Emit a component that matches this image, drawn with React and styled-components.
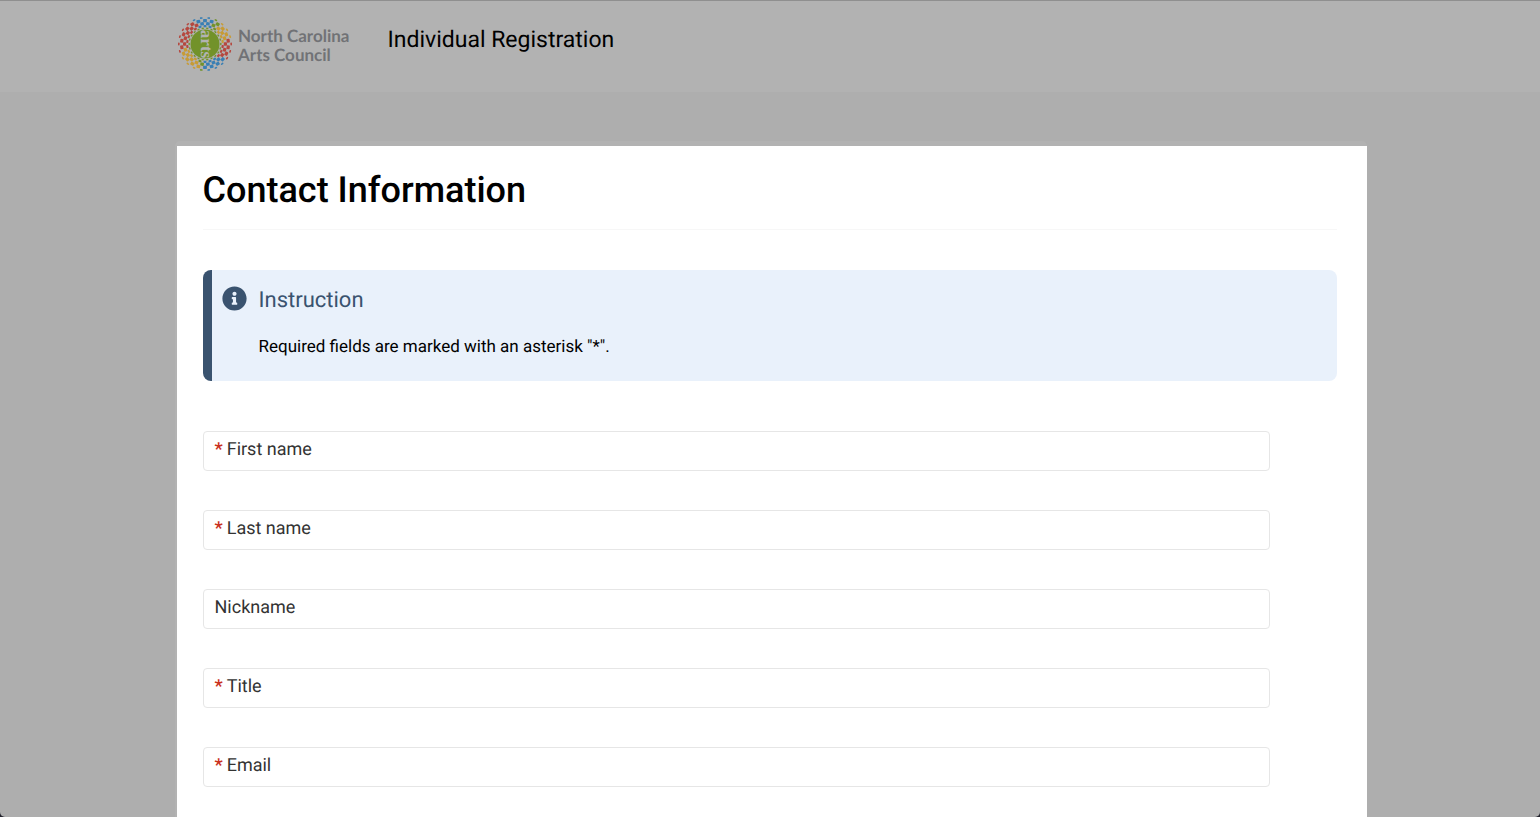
import React from "react";
import styled, { createGlobalStyle } from "styled-components";
import { FaInfoCircle } from "react-icons/fa";

const GlobalStyle = createGlobalStyle`
  * {
    box-sizing: border-box;
  }
  body {
    margin: 0;
    background-color: #22222c;
    font-family: Roboto, "Liberation Sans", sans-serif;
    color: #000;
    text-rendering: geometricPrecision;
  }
`;

const Page = styled.div`
  height: 100vh;
  overflow-y: auto;
  scrollbar-width: none;
  background-color: #aeaeae;
  border-top: 1px solid #8f8f8f;
  border-radius: 0 0 5px 5px;
`;

const Header = styled.header`
  display: flex;
  align-items: flex-start;
  gap: 38px;
  height: 91px;
  padding: 15px 5% 0 calc(50% - 592px);
  background-color: #b2b2b2;
`;

const Logo = styled.a`
  display: flex;
  align-items: center;
  gap: 6px;
  color: #717276;
  text-decoration: none;
`;

const LogoText = styled.span`
  padding-top: 2px;
  font-family: Lato, "Open Sans", sans-serif;
  font-size: 17px;
  font-weight: 700;
  line-height: 19px;
  white-space: nowrap;
`;

const PageTitle = styled.h1`
  margin: 0;
  padding-top: 10px;
  font-size: 23px;
  font-weight: 400;
  line-height: 28px;
`;

const Main = styled.main`
  padding: 49px 0 0 1px;
`;

const Card = styled.div`
  max-width: 1192px;
  margin: 0 auto;
  padding: 5px 0 0 2px;
  background-color: #b2b2b2;
  border-radius: 5px 5px 0 0;
`;

const Form = styled.form`
  padding: 20px 30px 40px 26px;
  background-color: #fff;
`;

const Heading = styled.h2`
  margin: 0 0 40px;
  padding-bottom: 15px;
  border-bottom: 1px solid #f7f7f7;
  font-size: 36px;
  font-weight: 500;
  line-height: 48px;
`;

const Notice = styled.section`
  display: flex;
  gap: 12px;
  margin-bottom: 50px;
  padding: 16px 20px 20px 10px;
  background-color: #e9f1fb;
  border-left: 9px solid #3a536f;
  border-radius: 8px;
  color: #3a536f;
`;

const NoticeTitle = styled.h3`
  margin: 0 0 18px;
  font-size: 22px;
  font-weight: 400;
  line-height: 30px;
`;

const NoticeText = styled.p`
  margin: 0;
  color: #000;
  font-size: 17px;
  line-height: 27px;
`;

const Fields = styled.div`
  display: grid;
  gap: 39px;
  margin-right: 67px;
`;

const Field = styled.div`
  display: flex;
  height: 40px;
  padding: 0 11px 2px;
  border: 1px solid #e6e6e6;
  border-radius: 4px;

  &:focus-within {
    border-color: #3a536f;
  }
`;

const Label = styled.label`
  color: #333;
  font-size: 18px;
  line-height: 36px;
  white-space: nowrap;
`;

const Asterisk = styled.span`
  margin-right: 4px;
  color: #c9301c;
  font-weight: 700;
`;

const Input = styled.input`
  flex: 1;
  min-width: 0;
  padding: 0 0 0 10px;
  border: none;
  outline: none;
  background: transparent;
  font: inherit;
  font-size: 18px;
`;

const fields = [
  { name: "firstName", label: "First name", required: true },
  { name: "lastName", label: "Last name", required: true },
  { name: "nickname", label: "Nickname" },
  { name: "title", label: "Title", required: true },
  { name: "email", label: "Email", required: true }
];

const rings = [
  { r: 15.8, w: 2.4, h: 1.4 },
  { r: 17.8, w: 3, h: 2.2 },
  { r: 20.4, w: 3.6, h: 3.2 },
  { r: 23.4, w: 3.8, h: 3.2 },
  { r: 26.2, w: 2.8, h: 1.6 }
];

// colour of a tile, going clockwise from the top
const tileColor = (angle, ring) => {
  if (ring === 0) return "#72922a";
  const a = (angle + ring * 3) % 360;
  if (a < 28) return "#397fb4";
  if (a < 45) return "#72922a";
  if (a < 90) return "#c79b35";
  if (a < 138) return "#b5483f";
  if (a < 190) return "#397fb4";
  if (a < 205) return "#72922a";
  if (a < 262) return "#c79b35";
  if (a < 345) return "#b5483f";
  return "#397fb4";
};

const count = 22;

const LogoMark = () => (
  <svg width="54" height="56" viewBox="-27 -28 54 56" aria-hidden="true">
    {rings.map((ring, i) =>
      Array.from({ length: count }, (_, n) => {
        const angle = ((n + (i % 2 ? 0 : 0.5)) * 360) / count;
        const { r, w, h } = ring;
        return (
          <rect
            key={`${i}-${n}`}
            x={-w / 2}
            y={-r - h / 2}
            width={w}
            height={h}
            rx="0.7"
            transform={`rotate(${angle})`}
            fill={tileColor(angle, i)}
          />
        );
      })
    )}
    <circle r="14.5" fill="#72922a" />
    <text
      transform="rotate(90)"
      y="4"
      textAnchor="middle"
      fontFamily="'Liberation Serif', serif"
      fontSize="17"
      fontWeight="700"
      fill="#b2b2b2"
    >
      arts
    </text>
  </svg>
);

class App extends React.Component {
  constructor() {
    super();
    this.state = {
      firstName: "",
      lastName: "",
      nickname: "",
      title: "",
      email: ""
    };
  }

  fieldChange = event => {
    this.setState({
      [event.target.name]: event.target.value
    });
  };

  render() {
    return (
      <Page>
        <GlobalStyle />
        <Header>
          <Logo href="#">
            <LogoMark />
            <LogoText>
              North Carolina
              <br />
              Arts Council
            </LogoText>
          </Logo>
          <PageTitle>Individual Registration</PageTitle>
        </Header>
        <Main>
          <Card>
            <Form>
              <Heading>Contact Information</Heading>
              <Notice>
                <FaInfoCircle size={25} />
                <div>
                  <NoticeTitle>Instruction</NoticeTitle>
                  <NoticeText>
                    Required fields are marked with an asterisk "*".
                  </NoticeText>
                </div>
              </Notice>
              <Fields>
                {fields.map(field => (
                  <Field key={field.name}>
                    <Label htmlFor={field.name}>
                      {field.required && <Asterisk>*</Asterisk>}
                      {field.label}
                    </Label>
                    <Input
                      id={field.name}
                      name={field.name}
                      type={field.name === "email" ? "email" : "text"}
                      required={field.required}
                      value={this.state[field.name]}
                      onChange={this.fieldChange}
                    />
                  </Field>
                ))}
              </Fields>
            </Form>
          </Card>
        </Main>
      </Page>
    );
  }
}

export default App;
